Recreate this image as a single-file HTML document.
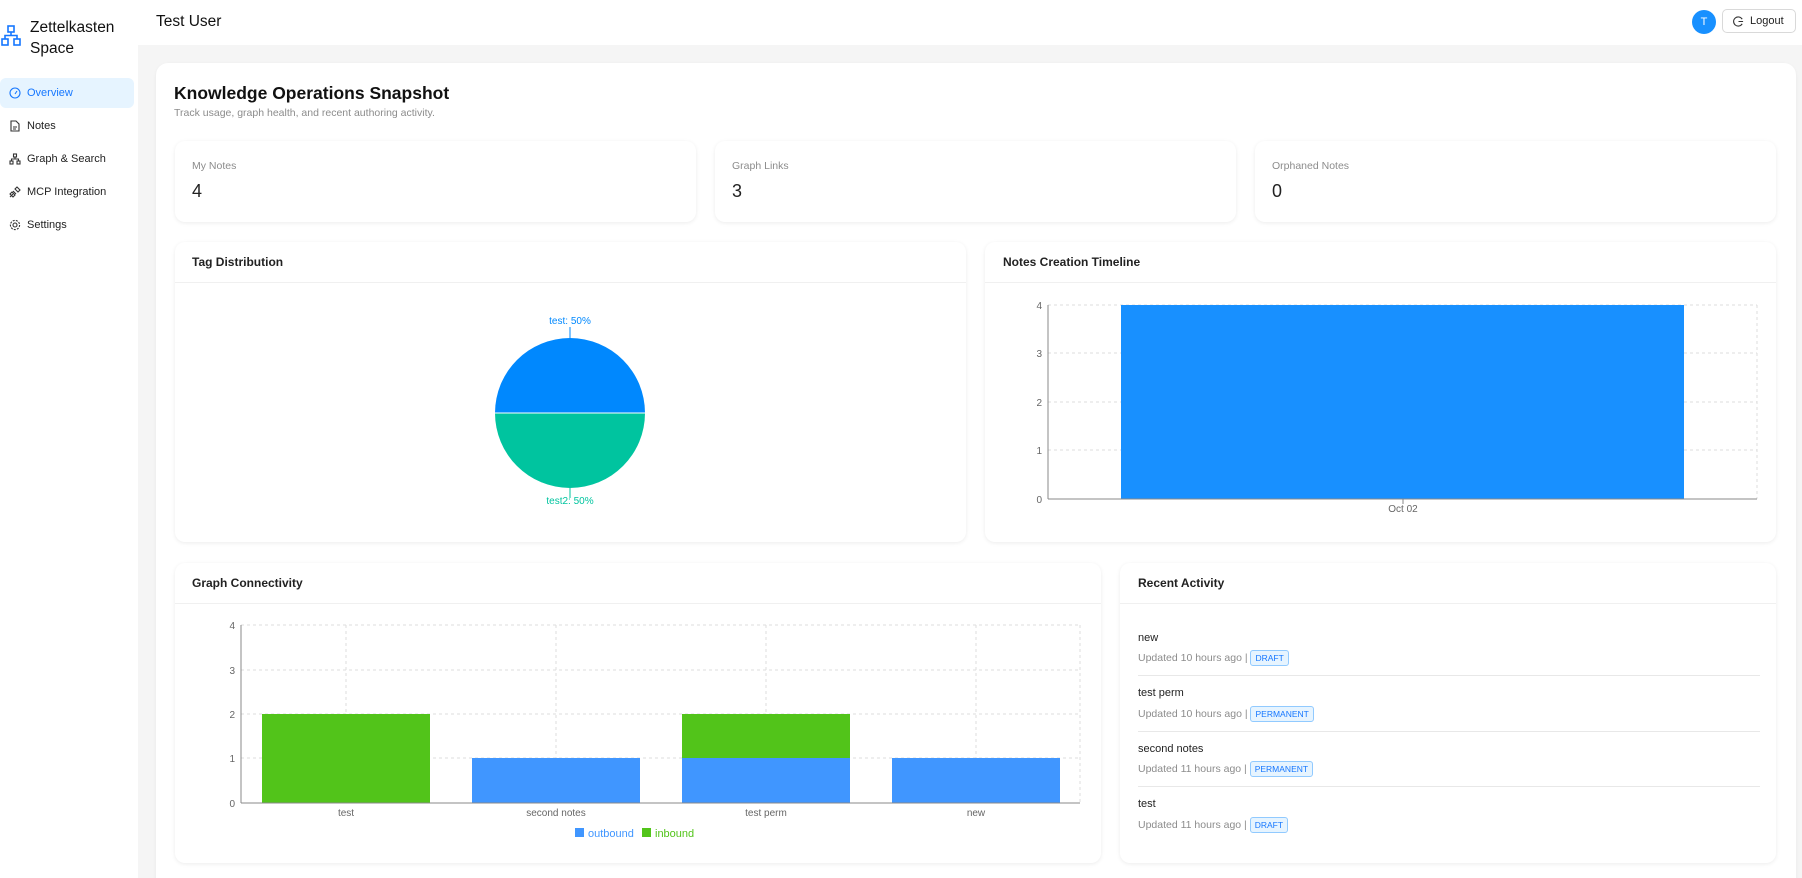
<!DOCTYPE html>
<html><head><meta charset="utf-8"><style>
*{box-sizing:border-box;margin:0;padding:0}
html,body{width:1802px;height:878px;overflow:hidden}
body{background:#f5f5f5;font-family:"Liberation Sans",sans-serif;color:#1f1f1f;position:relative}
.abs{position:absolute}
.side{left:0;top:0;width:138px;height:878px;background:#fff}
.hdr{left:0;top:0;width:1802px;height:45px;background:#fff}
.menu{left:0;width:134px;height:30px;font-size:11px;line-height:30px;padding-left:27px;color:#222}
.menu svg{position:absolute;left:9px;top:9px}
.card{background:#fff;border-radius:12px;box-shadow:0 1px 3px rgba(0,0,0,.06)}
.stat{background:#fff;border-radius:10px;box-shadow:0 1px 4px rgba(0,0,0,.08)}
.lbl{font-size:10.5px;color:#8c8c8c}
.val{font-size:18px;color:#222}
.ct{font-size:12px;font-weight:bold;color:#222}
.div{height:1px;background:#f0f0f0}
.tag{display:inline-block;border:1px solid #91caff;background:#e6f4ff;color:#1677ff;font-size:8.5px;line-height:14px;padding:0 4px;border-radius:3px;vertical-align:middle}
.it{font-size:11px;color:#222}
.mt{font-size:10.5px;color:#8c8c8c}
</style></head><body>
<div class="abs side"></div>
<div class="abs hdr"></div>
<svg class="abs" style="left:1px;top:25px" width="20" height="22" viewBox="0 0 20 22" fill="none" stroke="#1677ff" stroke-width="1.6"><rect x="7" y="1" width="6" height="6"/><rect x="1" y="14" width="6" height="6"/><rect x="13" y="14" width="6" height="6"/><path d="M10 7v3.5M4 14v-3.5h12V14"/></svg>
<div class="abs" style="left:30px;top:17px;font-size:15.5px;line-height:21px;font-weight:500;color:#111">Zettelkasten<br>Space</div>
<div class="abs" style="left:156px;top:13px;font-size:15.5px;color:#111">Test User</div>
<div class="abs" style="left:1692px;top:10px;width:24px;height:24px;border-radius:50%;background:#1890ff;color:#fff;font-size:11px;line-height:24px;text-align:center">T</div>
<div class="abs" style="left:1722px;top:9px;width:74px;height:24px;border:1px solid #d9d9d9;border-radius:5px;font-size:11px;line-height:22px;padding-left:27px;color:#222">Logout
<svg class="abs" style="left:10px;top:6px" width="11" height="11" viewBox="0 0 12 12" fill="none" stroke="#333" stroke-width="1.2"><path d="M10 3.5A5 5 0 1 0 10 8.5M6 6h5"/></svg></div>

<div class="abs menu" style="top:78px;background:#e6f4ff;color:#1677ff;border-radius:6px">Overview<svg width="12" height="12" viewBox="0 0 12 12" fill="none" stroke="#1677ff" stroke-width="1.1"><circle cx="6" cy="6" r="5"/><path d="M6 7l2-3"/></svg></div>
<div class="abs menu" style="top:111px">Notes<svg width="12" height="12" viewBox="0 0 12 12" fill="none" stroke="#333" stroke-width="1.1"><path d="M2 1h5l3 3v7H2z M4 7h4M4 9h3"/></svg></div>
<div class="abs menu" style="top:144px">Graph &amp; Search<svg width="12" height="12" viewBox="0 0 12 12" fill="none" stroke="#333" stroke-width="1.1"><rect x="4.5" y="1" width="3" height="3"/><rect x="1" y="8" width="3" height="3"/><rect x="8" y="8" width="3" height="3"/><path d="M6 4v2M2.5 8V6h7v2"/></svg></div>
<div class="abs menu" style="top:177px">MCP Integration<svg width="12" height="12" viewBox="0 0 12 12" fill="none" stroke="#333" stroke-width="1.1"><path d="M1 11l3-3M4 5l3 3M6 3l3 3 2-2-3-3zM3 6l3 3-2 2-3-3z"/></svg></div>
<div class="abs menu" style="top:210px">Settings<svg width="12" height="12" viewBox="0 0 12 12" fill="none" stroke="#333" stroke-width="1.1"><circle cx="6" cy="6" r="2"/><circle cx="6" cy="6" r="4.6" stroke-dasharray="2 1.2"/></svg></div>

<div class="abs card" style="left:156px;top:63px;width:1640px;height:830px"></div>
<div class="abs" style="left:174px;top:83px;font-size:17.5px;font-weight:bold;color:#111">Knowledge Operations Snapshot</div>
<div class="abs" style="left:174px;top:107px;font-size:10.5px;color:#8c8c8c">Track usage, graph health, and recent authoring activity.</div>

<div class="abs stat" style="left:175px;top:141px;width:521px;height:81px"></div>
<div class="abs stat" style="left:715px;top:141px;width:521px;height:81px"></div>
<div class="abs stat" style="left:1255px;top:141px;width:521px;height:81px"></div>
<div class="abs lbl" style="left:192px;top:160px">My Notes</div><div class="abs val" style="left:192px;top:181px">4</div>
<div class="abs lbl" style="left:732px;top:160px">Graph Links</div><div class="abs val" style="left:732px;top:181px">3</div>
<div class="abs lbl" style="left:1272px;top:160px">Orphaned Notes</div><div class="abs val" style="left:1272px;top:181px">0</div>

<div class="abs stat" style="left:175px;top:242px;width:791px;height:300px"></div>
<div class="abs ct" style="left:192px;top:255px">Tag Distribution</div>
<div class="abs div" style="left:175px;top:282px;width:791px"></div>
<div class="abs stat" style="left:985px;top:242px;width:791px;height:300px"></div>
<div class="abs ct" style="left:1003px;top:255px">Notes Creation Timeline</div>
<div class="abs div" style="left:985px;top:282px;width:791px"></div>

<svg class="abs" style="left:175px;top:282px" width="791" height="258" font-family="Liberation Sans" font-size="10">
<path d="M320 131 A75 75 0 0 1 470 131 Z" fill="#0088fe"/>
<path d="M320 131 A75 75 0 0 0 470 131 Z" fill="#00c49f"/>
<line x1="320" y1="131" x2="470" y2="131" stroke="#fff"/>
<line x1="395" y1="45" x2="395" y2="56" stroke="#0088fe"/>
<line x1="395" y1="206" x2="395" y2="216" stroke="#00c49f"/>
<text x="395" y="42" fill="#0088fe" text-anchor="middle">test: 50%</text>
<text x="395" y="222" fill="#00c49f" text-anchor="middle">test2: 50%</text>
</svg>

<svg class="abs" style="left:985px;top:282px" width="791" height="258" font-family="Liberation Sans" font-size="10" fill="#666">
<g stroke="#ddd" stroke-dasharray="3 3"><line x1="63" y1="23" x2="772" y2="23"/><line x1="63" y1="71" x2="772" y2="71"/><line x1="63" y1="120" x2="772" y2="120"/><line x1="63" y1="168" x2="772" y2="168"/><line x1="772" y1="23" x2="772" y2="217"/><line x1="418" y1="23" x2="418" y2="217"/></g>
<rect x="136" y="23" width="563" height="194" fill="#1890ff"/>
<g stroke="#888"><line x1="63" y1="23" x2="63" y2="217"/><line x1="63" y1="217" x2="772" y2="217"/><line x1="418" y1="217" x2="418" y2="222"/></g>
<g text-anchor="end"><text x="57" y="27">4</text><text x="57" y="75">3</text><text x="57" y="124">2</text><text x="57" y="172">1</text><text x="57" y="221">0</text></g>
<text x="418" y="230" text-anchor="middle">Oct 02</text>
</svg>

<div class="abs stat" style="left:175px;top:563px;width:926px;height:300px"></div>
<div class="abs ct" style="left:192px;top:576px">Graph Connectivity</div>
<div class="abs div" style="left:175px;top:603px;width:926px"></div>
<svg class="abs" style="left:175px;top:603px" width="926" height="258" font-family="Liberation Sans" font-size="10" fill="#666">
<g stroke="#ddd" stroke-dasharray="3 3"><line x1="66" y1="22" x2="905" y2="22"/><line x1="66" y1="67" x2="905" y2="67"/><line x1="66" y1="111" x2="905" y2="111"/><line x1="66" y1="155" x2="905" y2="155"/><line x1="171" y1="22" x2="171" y2="200"/><line x1="381" y1="22" x2="381" y2="200"/><line x1="591" y1="22" x2="591" y2="200"/><line x1="801" y1="22" x2="801" y2="200"/><line x1="905" y1="22" x2="905" y2="200"/></g>
<rect x="87" y="111" width="168" height="89" fill="#52c41a"/>
<rect x="297" y="155" width="168" height="45" fill="#4096ff"/>
<rect x="507" y="155" width="168" height="45" fill="#4096ff"/>
<rect x="507" y="111" width="168" height="44" fill="#52c41a"/>
<rect x="717" y="155" width="168" height="45" fill="#4096ff"/>
<g stroke="#888"><line x1="66" y1="22" x2="66" y2="200"/><line x1="66" y1="200" x2="905" y2="200"/></g>
<g text-anchor="end"><text x="60" y="26">4</text><text x="60" y="71">3</text><text x="60" y="115">2</text><text x="60" y="159">1</text><text x="60" y="204">0</text></g>
<g text-anchor="middle"><text x="171" y="213">test</text><text x="381" y="213">second notes</text><text x="591" y="213">test perm</text><text x="801" y="213">new</text></g>
<rect x="400" y="225" width="9" height="9" fill="#4096ff"/><text x="413" y="234" fill="#4096ff" font-size="11">outbound</text>
<rect x="467" y="225" width="9" height="9" fill="#52c41a"/><text x="480" y="234" fill="#52c41a" font-size="11">inbound</text>
</svg>

<div class="abs stat" style="left:1120px;top:563px;width:656px;height:300px"></div>
<div class="abs ct" style="left:1138px;top:576px">Recent Activity</div>
<div class="abs div" style="left:1120px;top:603px;width:656px"></div>
<div class="abs it" style="left:1138px;top:632px">new</div>
<div class="abs mt" style="left:1138px;top:650px">Updated 10 hours ago | <span class="tag">DRAFT</span></div>
<div class="abs div" style="left:1138px;top:675px;width:622px;background:#e8e8e8"></div>
<div class="abs it" style="left:1138px;top:687px">test perm</div>
<div class="abs mt" style="left:1138px;top:706px">Updated 10 hours ago | <span class="tag">PERMANENT</span></div>
<div class="abs div" style="left:1138px;top:731px;width:622px;background:#e8e8e8"></div>
<div class="abs it" style="left:1138px;top:743px">second notes</div>
<div class="abs mt" style="left:1138px;top:761px">Updated 11 hours ago | <span class="tag">PERMANENT</span></div>
<div class="abs div" style="left:1138px;top:786px;width:622px;background:#e8e8e8"></div>
<div class="abs it" style="left:1138px;top:798px">test</div>
<div class="abs mt" style="left:1138px;top:817px">Updated 11 hours ago | <span class="tag">DRAFT</span></div>
</body></html>
